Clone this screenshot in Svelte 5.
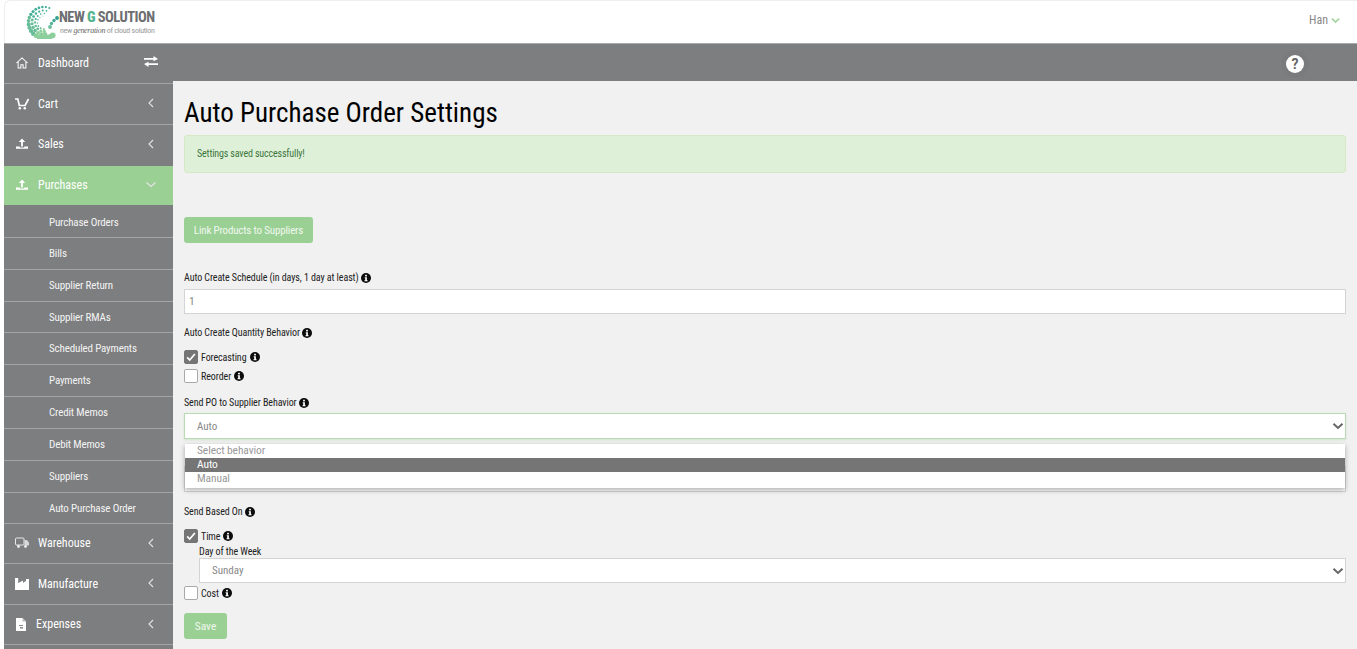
<script>
  const subs = ['Purchase Orders','Bills','Supplier Return','Supplier RMAs','Scheduled Payments','Payments','Credit Memos','Debit Memos','Suppliers','Auto Purchase Order'];
  const dots = [];
  const rings = [[15.5, 1.9, 70], [12, 1.6, 78], [9, 1.25, 88], [6.6, 0.9, 100]];
  rings.forEach(([r, base, start], ri) => {
    const step = 13 + ri * 5;
    for (let a = start; a <= 305 - ri * 12; a += step) {
      const t = (a - start) / 230;
      const rad = a * Math.PI / 180;
      dots.push({
        x: 18 + Math.cos(rad) * r,
        y: 17.5 - Math.sin(rad) * r,
        s: base * (0.55 + t * 0.95),
        c: t < 0.35 ? '#3fae96' : t < 0.7 ? '#66bd98' : '#8ccf9c'
      });
    }
  });
</script>

{#snippet info()}
  <svg class="info" viewBox="0 0 20 20" aria-hidden="true"><circle cx="10" cy="10" r="10" fill="#0c0c0c"/><rect x="8.2" y="3.6" width="3.6" height="3.2" fill="#fff"/><path d="M7.4 8.4h4.4v6h1.4v2.2H7v-2.2h1.4v-3.8h-1z" fill="#fff"/></svg>
{/snippet}
{#snippet chev(open)}
  <svg class="chev" viewBox="0 0 10 14" aria-hidden="true"><path d={open ? 'M0.5 4.500l4.500 4 4.500-4' : 'M7 3L3 7l4 4'} fill="none" stroke="#e4e4e4" stroke-width="1.1"/></svg>
{/snippet}
{#snippet selarrow()}
  <svg class="selarrow" viewBox="0 0 12 8" aria-hidden="true"><path d="M1.500 1.800L6 6l4.500-4.200" fill="none" stroke="#666" stroke-width="2"/></svg>
{/snippet}
{#snippet upload()}
  <svg class="ico" viewBox="0 0 14 12" aria-hidden="true"><path d="M7 0.500L3.800 4h2.300v4.500h1.800V4h2.300zM1 8.500h3.800v1h4.400v-1H13v2.200H1z" fill="#fff"/></svg>
{/snippet}
{#snippet tick()}
  <span class="box on"><svg viewBox="0 0 14 14" aria-hidden="true"><path d="M2.500 7.500l3 3 6-7" fill="none" stroke="#fff" stroke-width="2"/></svg></span>
{/snippet}

<div class="page">
  <header class="top">
    <div class="logo">
      <svg class="mark" viewBox="0 0 34 34" aria-hidden="true">
        {#each dots as d}<circle cx={d.x} cy={d.y} r={d.s} fill={d.c}/>{/each}
        <circle cx="31" cy="13" r="1.900" fill="#2f9d8c"/><circle cx="28" cy="15.500" r="1.700" fill="#3fa892"/><circle cx="25.500" cy="18.500" r="1.700" fill="#55b396"/><circle cx="24" cy="22" r="1.900" fill="#6abf9a"/>
      </svg>
      <div class="logotext">
        <div class="l1">NEW <b>G</b> SOLUTION</div>
        <div class="l2">new <i>generation</i> of cloud solution</div>
      </div>
    </div>
    <div class="user">Han <svg viewBox="0 0 10 7" class="uchev" aria-hidden="true"><path d="M1 1.400l4 3.800 4-3.800" fill="none" stroke="#a5d6a2" stroke-width="2"/></svg></div>
  </header>

  <div class="body">
    <aside class="side">
      <div class="item first">
        <svg class="ico" viewBox="0 0 14 13" aria-hidden="true"><path d="M1 6.500L7 1l6 5.500M2.800 5.500V12h3V8.500h2.400V12h3V5.500" fill="none" stroke="#fff" stroke-width="1.100"/></svg>
        <span class="lbl">Dashboard</span>
        <svg class="swap" viewBox="0 0 14 11" aria-hidden="true"><path d="M0 2h9.500V0L14 3 9.500 5.200V3.800H0zM14 7.200H4.500V5.800L0 8l4.500 3V9h9.500z" fill="#fff"/></svg>
      </div>
      <div class="item">
        <svg class="ico" viewBox="0 0 14 12" aria-hidden="true"><path d="M0 1h2.800l1.500 6.500h5.800L13.500 1" fill="none" stroke="#fff" stroke-width="1.700"/><circle cx="4.800" cy="10.300" r="1.300" fill="#fff"/><circle cx="9.800" cy="10.300" r="1.300" fill="#fff"/></svg>
        <span class="lbl">Cart</span>{@render chev(false)}
      </div>
      <div class="item sales">{@render upload()}<span class="lbl">Sales</span>{@render chev(false)}</div>
      <div class="item active">{@render upload()}<span class="lbl">Purchases</span>{@render chev(true)}</div>
      <ul class="subs">
        {#each subs as s}<li>{s}</li>{/each}
      </ul>
      <div class="item lower">
        <svg class="ico" viewBox="0 0 14 11" aria-hidden="true"><rect x="0.500" y="0.500" width="8.500" height="7" rx="1" fill="none" stroke="#e8e8e8"/><path d="M9.500 2.500h2.300L14 5v3H9.500z" fill="#d8d8d8"/><circle cx="3.500" cy="9" r="1.400" fill="#eee"/><circle cx="10.500" cy="9" r="1.400" fill="#eee"/></svg>
        <span class="lbl">Warehouse</span>{@render chev(false)}
      </div>
      <div class="item lower">
        <svg class="ico" viewBox="0 0 14 12" aria-hidden="true"><path d="M0 0h3.200v5L8 2.500v2.500l3-2.200V1h3v11H0z" fill="#fff"/></svg>
        <span class="lbl">Manufacture</span>{@render chev(false)}
      </div>
      <div class="item lower">
        <svg class="ico doc" viewBox="0 0 10 13" aria-hidden="true"><path d="M0 0h6.500L10 3.500V13H0z" fill="#fff"/><path d="M6.500 0v3.500H10" fill="#bbb"/><path d="M3 7h4v1H3zM4 9h3v1.500H4z" fill="#888"/></svg>
        <span class="lbl exp">Expenses</span>{@render chev(false)}
      </div>
      <div class="item"></div>
    </aside>

    <div class="right">
      <div class="band">
        <div class="help"><span>?</span></div>
      </div>
      <main class="main">
        <h1>Auto Purchase Order Settings</h1>
        <div class="alert">Settings saved successfully!</div>
        <button class="btn link">Link Products to Suppliers</button>

        <div class="label l-sched">Auto Create Schedule (in days, 1 day at least) {@render info()}</div>
        <div class="field input">1</div>

        <div class="label l-qty">Auto Create Quantity Behavior {@render info()}</div>
        <div class="check c-fore">{@render tick()}Forecasting {@render info()}</div>
        <div class="check c-reo"><span class="box"></span>Reorder {@render info()}</div>

        <div class="label l-send">Send PO to Supplier Behavior {@render info()}</div>
        <div class="selwrap">
          <div class="field select focus">Auto{@render selarrow()}</div>
          <div class="dropdown">
            <div class="opt">Select behavior</div>
            <div class="opt sel">Auto</div>
            <div class="opt">Manual</div>
          </div>
        </div>
        <div class="field under"></div>

        <div class="label l-based">Send Based On {@render info()}</div>
        <div class="check c-time">{@render tick()}Time {@render info()}</div>
        <div class="nested">
          <div class="label l-day">Day of the Week</div>
          <div class="field select day">Sunday{@render selarrow()}</div>
        </div>
        <div class="check c-cost"><span class="box"></span>Cost {@render info()}</div>
        <button class="btn save">Save</button>
      </main>
    </div>
  </div>
</div>

<style>
  :global(html), :global(body) { margin: 0; background: #fff; overflow: hidden; }
  .page {
    height: 649px; overflow: hidden; padding-left: 4px; box-sizing: border-box;
    font-family: Roboto, "Liberation Sans", sans-serif; font-stretch: condensed;
    font-size: 11px; color: #222;
    display: flex; flex-direction: column;
  }
  .top {
    height: 43px; flex: none; display: flex; justify-content: space-between; align-items: center;
    border-top: 1px solid #eee; border-left: 1px solid #eee; border-top-left-radius: 6px; box-sizing: border-box;
    padding: 0 17px 0 21px; background: #fff;
  }
  .logo { display: flex; align-items: center; }
  .mark { width: 34px; height: 34px; }
  .logotext { width: 100px; margin-left: -1px; padding-top: 2px; }
  .l1 { font-size: 14.500px; font-weight: 700; color: #6c6e70; letter-spacing: -0.55px; line-height: 15px; white-space: nowrap; }
  .l1 b { color: #54b38f; }
  .l2 { font-size: 8px; color: #9a9a9a; letter-spacing: -0.3px; line-height: 11px; white-space: nowrap; margin-left: 1px; }
  .l2 i { font-family: "Liberation Serif", serif; color: #666; }
  .user { font-size: 12px; color: #888; display: flex; align-items: center; gap: 3px; padding-bottom: 4px; }
  .uchev { width: 9px; height: 7px; }
  .body { flex: 1; display: flex; min-height: 0; }
  .side { width: 169px; flex: none; background: #7d7e80; color: #fff; }
  .item {
    height: 39px; padding-bottom: 1px; border-top: 1px solid #a3a4a5; display: flex; align-items: center;
    position: relative; font-size: 12px; padding-left: 11px;
  }
  .item.first { border-top: 1px solid #aaa; height: 37px; padding-bottom: 2px; }
  .item.sales { height: 38px; padding-bottom: 2px; }
  .item.active { background: #9bd095; height: 37px; padding-bottom: 2px; border-top-color: #7d7e80; }
  .item.active::after {
    content: ''; position: absolute; left: 100%; top: 10px; border: 9px solid transparent; border-left-color: #9bd095; border-right-width: 0;
  }
  .item.lower { height: 38.500px; }
  .subs + .item.lower { height: 38px; }
  .ico { width: 14px; height: 12px; flex: none; }
  .doc { width: 10px; height: 13px; margin-left: 1px; }
  .lbl { margin-left: 9px; }
  .lbl.exp { margin-left: 10px; }
  .chev { position: absolute; right: 17px; top: 50%; margin-top: -8px; width: 10px; height: 14px; }
  .swap { position: absolute; left: 140px; top: 12px; width: 14px; height: 11px; }
  .subs { list-style: none; margin: 0; padding: 0; }
  .subs li {
    height: 31.830px; line-height: 32px; box-sizing: border-box; border-top: 1px solid #a3a4a5; padding-left: 45px;
    font-size: 11px; letter-spacing: -0.15px; color: #f4f4f4;
  }
  .subs li:first-child { border-top: 0; height: 32px; line-height: 36px; }
  .right { flex: 1; min-width: 0; display: flex; flex-direction: column; }
  .band { height: 38px; flex: none; background: #7d7e80; position: relative; border-top: 1px solid #aaa; box-sizing: border-box; }
  .help {
    position: absolute; left: 1113px; top: 11px; width: 18px; height: 18px; border-radius: 50%; background: #fff;
    box-shadow: 0 0 0 5px rgba(0,0,0,.025);
    color: #666; font-size: 14px; font-weight: 700; line-height: 18px; text-align: center; font-stretch: normal;
  }
  .main { flex: 1; background: #f1f1f1; padding: 0 11px; position: relative; }
  h1 { font-size: 27px; font-weight: 400; color: #000; margin: 16px 0 0; line-height: 32px; height: 32px; }
  .alert {
    margin-top: 6px; height: 38px; box-sizing: border-box; border: 1px solid #d6e9c6; border-radius: 3px; background: #dff0d8;
    color: #3c763d; font-size: 10px; line-height: 36px; padding-left: 12px; letter-spacing: -0.15px;
  }
  .btn {
    display: block; border: 0; border-radius: 3px; background: #9bd095; color: #fff; font: inherit; letter-spacing: inherit; padding: 0;
  }
  .link { margin-top: 44px; width: 129px; height: 26px; font-size: 11px; letter-spacing: -0.17px; color: #f0f7ef; }
  .label { display: flex; align-items: center; gap: 2px; height: 14px; line-height: 14px; color: #222; white-space: nowrap; font-size: 10px; letter-spacing: -0.08px; }
  .l-sched { margin-top: 28px; }
  .l-qty { margin-top: 12px; }
  .l-send { margin-top: 13px; }
  .l-based { margin-top: 13px; }
  .l-day { height: 12px; line-height: 12px; }
  .info { width: 10px; height: 10px; flex: none; }
  .field {
    background: #fff; border: 1px solid #d4d4d4; box-sizing: border-box; color: #888; position: relative; font-size: 11px;
  }
  .input { margin-top: 4px; height: 25px; line-height: 23px; padding-left: 4px; font-size: 11.500px; }
  .select { height: 26px; line-height: 25px; padding-left: 12px; }
  .selwrap { position: relative; margin-top: 3px; z-index: 2; }
  .focus { border-color: #b9dcb4; box-shadow: 0 1px 2px rgba(150,200,140,.35); }
  .selarrow { position: absolute; right: 1px; top: 8px; width: 12px; height: 8px; }
  .under { height: 26px; margin-top: 27px; }
  .dropdown {
    position: absolute; left: 1px; right: 1px; top: 31px; background: #fff; box-shadow: 0 2px 5px rgba(0,0,0,.32); padding-bottom: 2px;
    font-size: 11.500px; letter-spacing: -0.1px;
  }
  .opt { height: 14px; line-height: 13px; padding-left: 12px; color: #999; }
  .opt.sel { background: #757575; color: #fff; }
  .check { display: flex; align-items: center; gap: 3px; white-space: nowrap; font-size: 10px; letter-spacing: -0.08px; color: #222; height: 14px; }
  .box {
    width: 14px; height: 14px; box-sizing: border-box; background: #fff; border: 1px solid #aaa; border-radius: 2px; flex: none;
  }
  .box.on { background: #757575; border-color: #757575; display: flex; }
  .box svg { width: 12px; height: 12px; }
  .c-fore { margin-top: 10px; }
  .c-reo { margin-top: 5px; }
  .c-time { margin-top: 10px; }
  .nested { margin-left: 15px; margin-top: 3px; }
  .day { height: 25px; margin-top: 0; line-height: 23px; }
  .c-cost { margin-top: 3px; }
  .save { margin-top: 13px; width: 43px; height: 26px; font-size: 11.500px; color: #eef7ec; }
</style>
